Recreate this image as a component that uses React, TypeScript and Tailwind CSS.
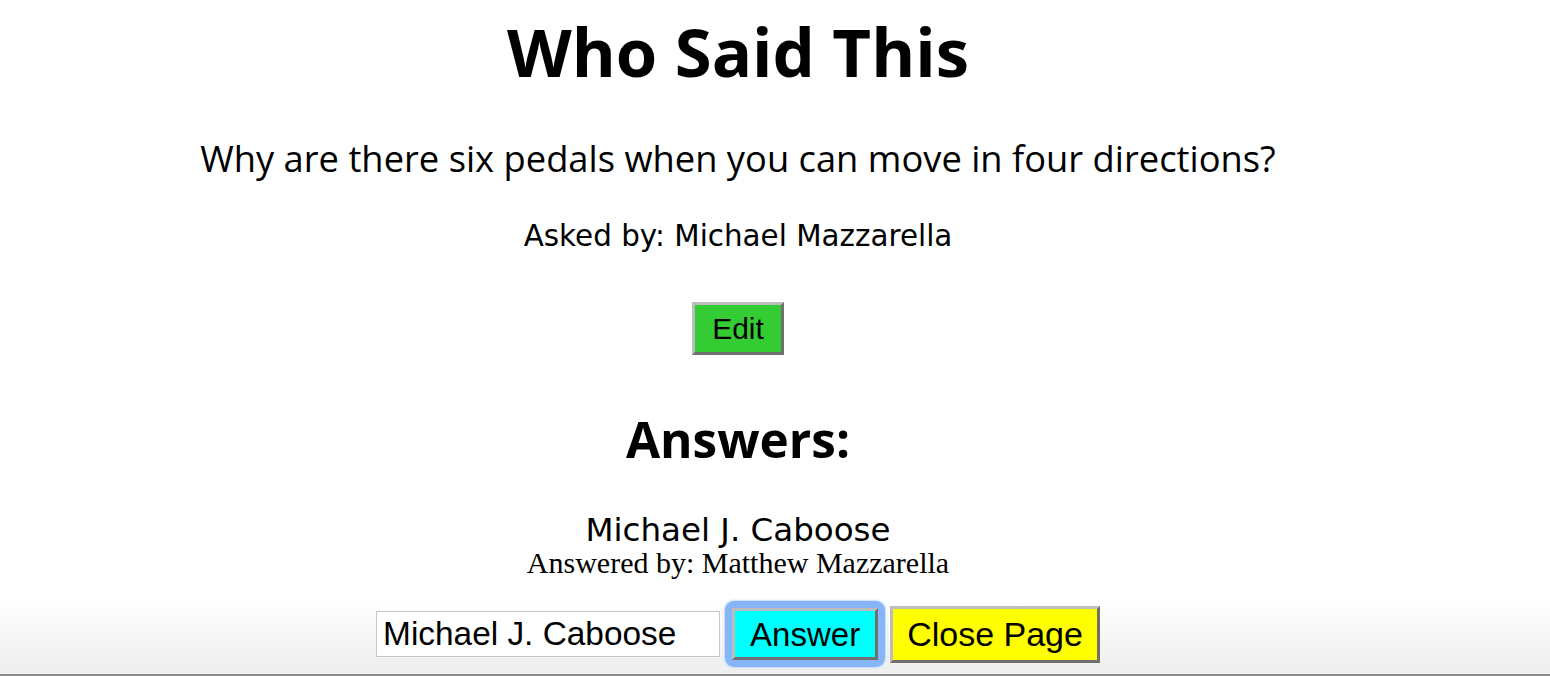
import React, { useState } from 'react';

const App = () => {
  const [answer, setAnswer] = useState('Michael J. Caboose');

  return (
    <div className="min-h-screen bg-white text-black">
      <div className="w-[1476px] text-center">
        {/* Question */}
        <h1 className="pt-[18px] text-[67px] leading-[67px] font-bold font-['Open_Sans',sans-serif]">
          Who Said This
        </h1>
        <p className="mt-[55px] text-[36.3px] leading-[36px] font-['Open_Sans',sans-serif]">
          Why are there six pedals when you can move in four directions?
        </p>
        <p className="mt-[46px] text-[29.4px] leading-[29px] font-['DejaVu_Sans',sans-serif]">
          Asked by: Michael Mazzarella
        </p>
        <div className="mt-[51px] flex justify-center">
          <button className="h-[53px] px-[17px] bg-[#33cc33] border-[3px] border-t-[#bdbdbd] border-l-[#bdbdbd] border-b-[#707070] border-r-[#707070] text-[30px] leading-none font-['Liberation_Sans',sans-serif]">
            Edit
          </button>
        </div>

        {/* Answers */}
        <h2 className="mt-[60px] text-[49.5px] leading-[49px] font-bold font-['Open_Sans',sans-serif]">
          Answers:
        </h2>
        <div className="mt-[50px]">
          <p className="text-[32.5px] leading-[32px] font-['DejaVu_Sans',sans-serif]">Michael J. Caboose</p>
          <p className="mt-[2px] text-[30px] leading-[30px] font-['Liberation_Serif',serif]">Answered by: Matthew Mazzarella</p>
        </div>
      </div>

      {/* Answer bar */}
      <div className="mt-[22px] h-[76px] w-full border-b-2 border-[#8c8c8c] bg-linear-to-b from-white to-[#eeeeee]">
        <div className="w-[1476px] h-full pb-[6px] flex items-center justify-center gap-[12px] font-['Liberation_Sans',sans-serif]">
          <input
            value={answer}
            onChange={(e) => setAnswer(e.target.value)}
            className="w-[344px] h-[46px] border border-[#c6c6c6] bg-white pl-[6px] text-[33.4px] leading-none outline-none"
          />
          <span className="relative flex">
            <span className="absolute -inset-[7px] rounded-[9px] bg-[#86b6f8] shadow-[0_0_2px_1px_#c3dbfb]" />
            <button className="relative h-[52px] px-[15px] bg-[#00ffff] border-[3px] border-t-[#bdbdbd] border-l-[#bdbdbd] border-b-[#707070] border-r-[#707070] text-[33px] leading-none">
              Answer
            </button>
          </span>
          <button className="h-[57px] px-[14px] bg-[#ffff00] border-[3px] border-t-[#bdbdbd] border-l-[#bdbdbd] border-b-[#707070] border-r-[#707070] text-[34px] leading-none">
            Close Page
          </button>
        </div>
      </div>
    </div>
  );
};

export default App;
